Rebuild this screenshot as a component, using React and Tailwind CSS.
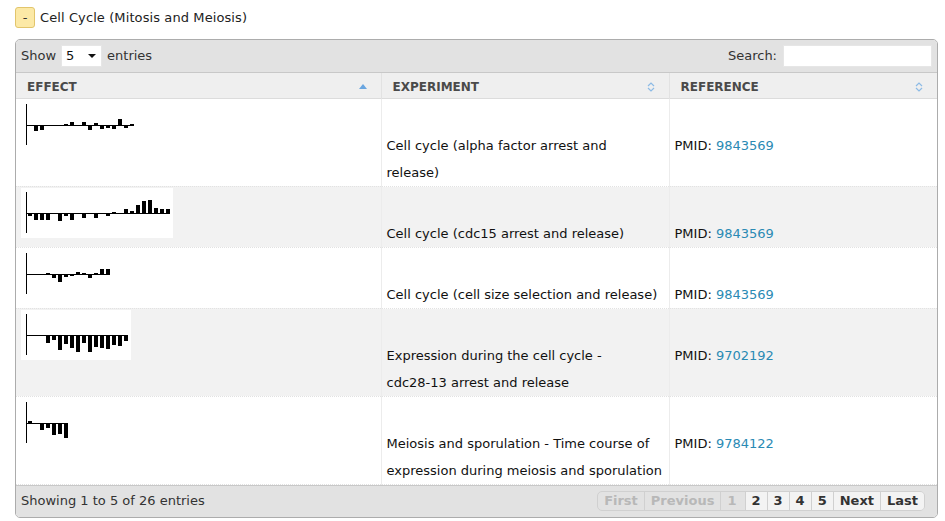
import React from 'react';

const rows = [
  {
    w: 118,
    vals: [0, -5, -4, 0, 0, 0, 1, 3, 0, 3, -4, 2, -3, -2, -3, 6, -2, 1],
    exp: ['Cell cycle (alpha factor arrest and', 'release)'],
    pmid: '9843569',
  },
  {
    w: 152,
    vals: [-2, -6, -6, -6, 0, -7, -2, -6, 0, -4, 0, -4, 0, -2, 1, 0, 4, 2, 8, 12, 13, 5, 4, 4],
    exp: ['Cell cycle (cdc15 arrest and release)'],
    pmid: '9843569',
  },
  {
    w: 94,
    vals: [0, 0, 0, 1, -3, -7, -2, -1, 2, 1, -3, 1, 5, 5],
    exp: ['Cell cycle (cell size selection and release)'],
    pmid: '9843569',
  },
  {
    w: 110,
    vals: [0, 0, 0, -7, -4, -14, -8, -12, -16, -7, -16, -11, -12, -13, -9, -10, -5],
    exp: ['Expression during the cell cycle -', 'cdc28-13 arrest and release'],
    pmid: '9702192',
  },
  {
    w: 50,
    vals: [2, 0, -6, -4, -11, -10, -14],
    exp: ['Meiosis and sporulation - Time course of', 'expression during meiosis and sporulation'],
    pmid: '9784122',
  },
];

// little bar chart drawn like the server-side sparkline images
const Spark = ({ w, vals }) => {
  const end = 7 + 6 * (vals.length - 1) + 4;
  return (
    <svg width={w} height="50" className="inline-block bg-white align-baseline">
      <rect x="5" y="4" width="1" height="41" fill="#000" />
      <rect x="5" y="25" width={end - 5} height="1" fill="#000" />
      {vals.map((v, i) =>
        v === 0 ? null : (
          <rect
            key={i}
            x={7 + 6 * i}
            y={v > 0 ? 25 - v : 25}
            width="4"
            height={Math.abs(v) + 1}
            fill="#000"
          />
        )
      )}
    </svg>
  );
};

const SortBoth = () => (
  <svg width="8" height="10" viewBox="0 0 8 10" className="shrink-0">
    <path d="M1 4 L4 1 L7 4" fill="none" stroke="#8dbbe6" strokeWidth="1.2" />
    <path d="M1 6 L4 9 L7 6" fill="none" stroke="#8dbbe6" strokeWidth="1.2" />
  </svg>
);

const SortUp = () => (
  <svg width="8" height="5" viewBox="0 0 8 5" className="shrink-0">
    <path d="M0 5 L4 0 L8 5 Z" fill="#6aa6e0" />
  </svg>
);

const HeadCell = ({ label, icon, last }) => (
  <th
    className={`h-[25px] p-0 text-left font-bold text-[12px] text-[#4a4a4a] ${
      last ? '' : 'border-r border-[#e2e2e2]'
    }`}
  >
    <div className="flex items-center justify-between pl-[11px] pr-[14px] pt-[3px]">
      <span>{label}</span>
      {icon}
    </div>
  </th>
);

const pageBtn = 'px-[6px] h-[18px] flex items-center border-l border-[#d0d0d0]';

export default function App() {
  return (
    <div
      className="w-[945px] h-[521px] bg-white pt-[7px] px-[15px] text-[13px] text-[#111]"
      style={{ fontFamily: '"DejaVu Sans", Verdana, sans-serif' }}
    >
      <div className="flex items-center gap-[5px] h-[21px]">
        <button className="w-[20px] h-[21px] flex items-center justify-center border border-[#e2c56c] bg-[#fce9a6] rounded-[3px] text-[13px] text-[#333]">
          -
        </button>
        <span className="text-[#222] tracking-[0.1px]">Cell Cycle (Mitosis and Meiosis)</span>
      </div>

      <div className="mt-[11px] w-[923px] border border-[#acacac] rounded-[5px] overflow-hidden">
        {/* toolbar */}
        <div className="h-[33px] bg-[#e2e2e2] border-b border-[#c8c8c8] flex items-center justify-between px-[5px] text-[#333]">
          <div className="flex items-center gap-[5px]">
            <span>Show</span>
            <div className="w-[41px] h-[22px] bg-white border border-[#e6e6e6] flex items-center justify-between pl-[4px] pr-[5px] text-[#111]">
              <span>5</span>
              <svg width="8" height="4" viewBox="0 0 8 4">
                <path d="M0 0 L8 0 L4 4 Z" fill="#111" />
              </svg>
            </div>
            <span>entries</span>
          </div>
          <div className="flex items-center gap-[6px]">
            <span>Search:</span>
            <div className="w-[149px] h-[22px] bg-white border border-[#e6e6e6]" />
          </div>
        </div>

        <table className="w-full table-fixed border-collapse">
          <colgroup>
            <col className="w-[365px]" />
            <col className="w-[288px]" />
            <col />
          </colgroup>
          <thead>
            <tr className="bg-[#efefef] border-b border-[#dcdcdc]">
              <HeadCell label="EFFECT" icon={<SortUp />} />
              <HeadCell label="EXPERIMENT" icon={<SortBoth />} />
              <HeadCell label="REFERENCE" icon={<SortBoth />} last />
            </tr>
          </thead>
          <tbody>
            {rows.map((r, i) => (
              <tr
                key={i}
                className={`${i % 2 ? 'bg-[#f2f2f2]' : 'bg-white'} border-b border-dotted border-[#e2e2e2]`}
              >
                <td className="align-baseline leading-[27px] px-[5px] pt-[1px] pb-0 border-r border-[#ececec]">
                  <Spark w={r.w} vals={r.vals} />
                </td>
                <td className="align-baseline leading-[27px] px-[5px] pt-[1px] pb-0 border-r border-[#ececec] whitespace-nowrap overflow-hidden">
                  {r.exp.map((line, j) => (
                    <React.Fragment key={j}>
                      {j > 0 && <br />}
                      {line}
                    </React.Fragment>
                  ))}
                </td>
                <td className="align-baseline leading-[27px] px-[5px] pt-[1px] pb-0">
                  PMID: <a className="text-[#2a8ab4]">{r.pmid}</a>
                </td>
              </tr>
            ))}
          </tbody>
        </table>

        {/* footer */}
        <div className="h-[32px] bg-[#e2e2e2] border-t border-[#c8c8c8] flex items-center justify-between pl-[5px] pr-[12px] text-[#333]">
          <span>Showing 1 to 5 of 26 entries</span>
          <div className="flex items-center font-bold text-[13px] border border-[#d0d0d0] rounded-[5px] overflow-hidden">
            <span className="px-[6px] h-[18px] flex items-center text-[#b8b8b8]">First</span>
            <span className={`${pageBtn} text-[#b8b8b8]`}>Previous</span>
            <span className={`${pageBtn} text-[#b8b8b8] mr-[2px]`}>1</span>
            {['2', '3', '4', '5', 'Next', 'Last'].map((p) => (
              <span key={p} className={`${pageBtn} bg-[#f3f3f3] text-[#333]`}>
                {p}
              </span>
            ))}
          </div>
        </div>
      </div>
    </div>
  );
}
